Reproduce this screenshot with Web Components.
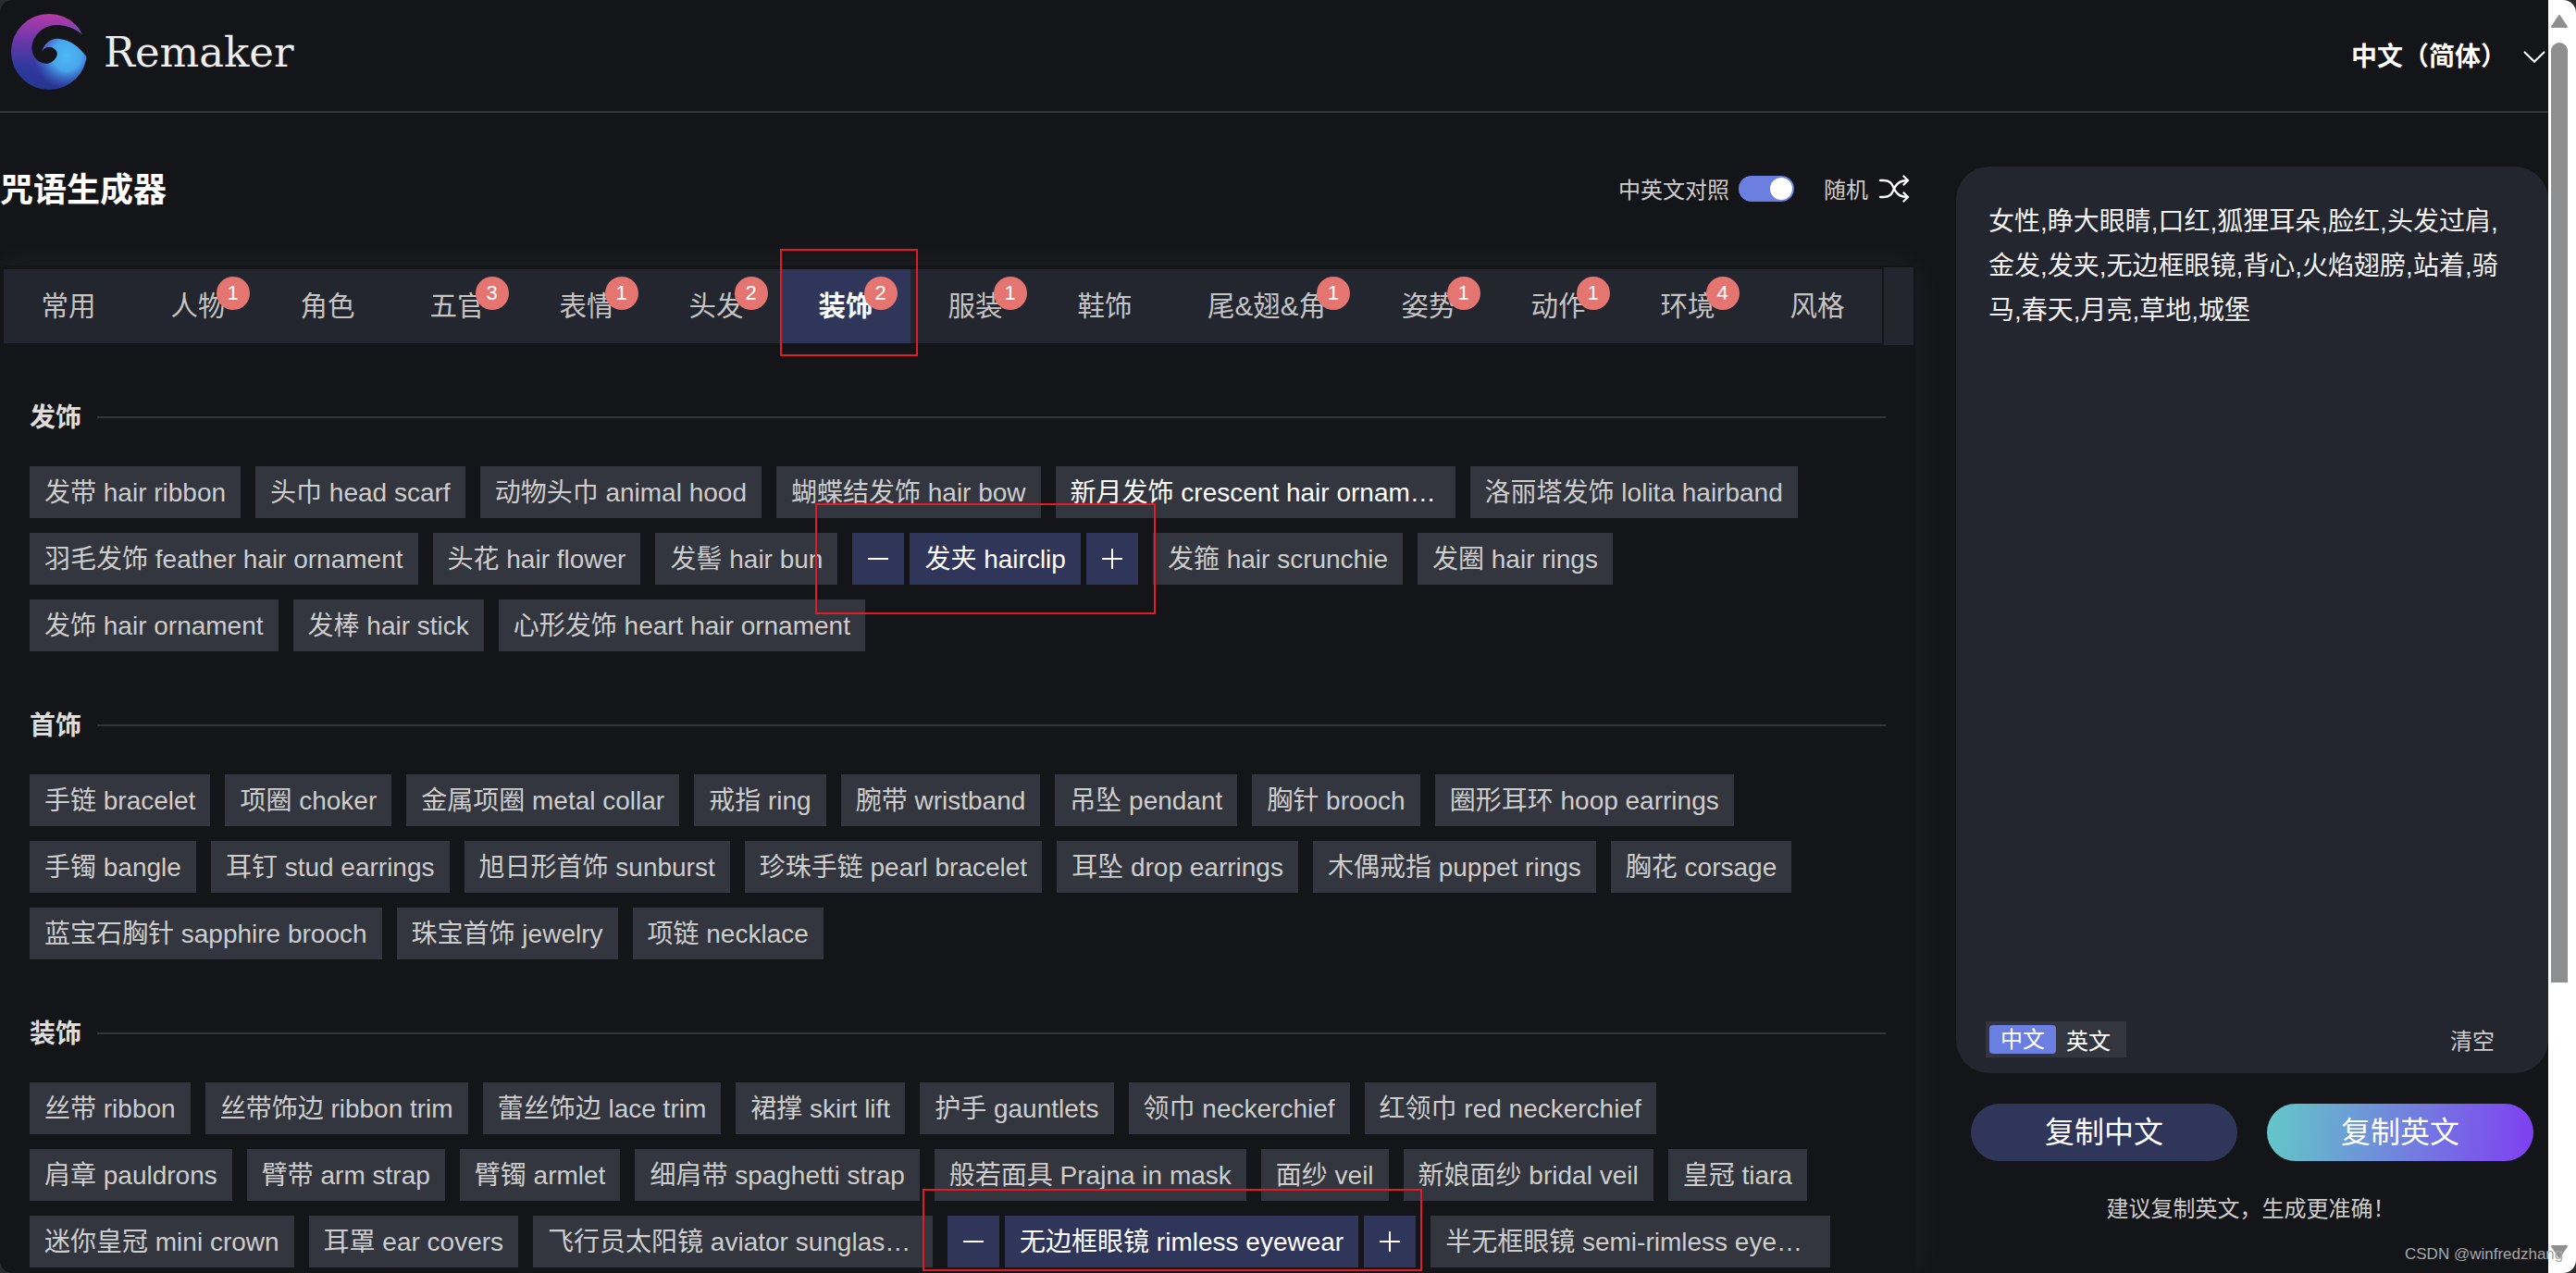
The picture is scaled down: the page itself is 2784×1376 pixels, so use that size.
<!DOCTYPE html>
<html lang="zh"><head><meta charset="utf-8"><title>Remaker</title>
<style>
html,body{margin:0;padding:0;background:#2a2a2c;overflow:hidden}
body{font-family:"Liberation Sans","Noto Sans CJK SC",sans-serif;width:2784px;height:1376px}
</style></head><body>
<x-app>
  <x-header slot="header"></x-header>
  <x-generator slot="main">
    <x-tabs>
      <x-tab>常用</x-tab><x-tab badge="1">人物</x-tab><x-tab>角色</x-tab><x-tab badge="3">五官</x-tab><x-tab badge="1">表情</x-tab><x-tab badge="2">头发</x-tab><x-tab badge="2" active>装饰</x-tab><x-tab badge="1">服装</x-tab><x-tab>鞋饰</x-tab><x-tab badge="1" wide>尾&amp;翅&amp;角</x-tab><x-tab badge="1">姿势</x-tab><x-tab badge="1">动作</x-tab><x-tab badge="4">环境</x-tab><x-tab>风格</x-tab>
    </x-tabs>
    <x-section heading="发饰">
      <x-chip>发带 hair ribbon</x-chip><x-chip>头巾 head scarf</x-chip><x-chip>动物头巾 animal hood</x-chip><x-chip>蝴蝶结发饰 hair bow</x-chip><x-chip bright>新月发饰 crescent hair ornament</x-chip><x-chip>洛丽塔发饰 lolita hairband</x-chip>
      <x-chip>羽毛发饰 feather hair ornament</x-chip><x-chip>头花 hair flower</x-chip><x-chip>发髻 hair bun</x-chip><x-chip selected>发夹 hairclip</x-chip><x-chip>发箍 hair scrunchie</x-chip><x-chip>发圈 hair rings</x-chip>
      <x-chip>发饰 hair ornament</x-chip><x-chip>发棒 hair stick</x-chip><x-chip>心形发饰 heart hair ornament</x-chip>
    </x-section>
    <x-section heading="首饰">
      <x-chip>手链 bracelet</x-chip><x-chip>项圈 choker</x-chip><x-chip>金属项圈 metal collar</x-chip><x-chip>戒指 ring</x-chip><x-chip>腕带 wristband</x-chip><x-chip>吊坠 pendant</x-chip><x-chip>胸针 brooch</x-chip><x-chip>圈形耳环 hoop earrings</x-chip>
      <x-chip>手镯 bangle</x-chip><x-chip>耳钉 stud earrings</x-chip><x-chip>旭日形首饰 sunburst</x-chip><x-chip>珍珠手链 pearl bracelet</x-chip><x-chip>耳坠 drop earrings</x-chip><x-chip>木偶戒指 puppet rings</x-chip><x-chip>胸花 corsage</x-chip>
      <x-chip>蓝宝石胸针 sapphire brooch</x-chip><x-chip>珠宝首饰 jewelry</x-chip><x-chip>项链 necklace</x-chip>
    </x-section>
    <x-section heading="装饰">
      <x-chip>丝带 ribbon</x-chip><x-chip>丝带饰边 ribbon trim</x-chip><x-chip>蕾丝饰边 lace trim</x-chip><x-chip>裙撑 skirt lift</x-chip><x-chip>护手 gauntlets</x-chip><x-chip>领巾 neckerchief</x-chip><x-chip>红领巾 red neckerchief</x-chip>
      <x-chip>肩章 pauldrons</x-chip><x-chip>臂带 arm strap</x-chip><x-chip>臂镯 armlet</x-chip><x-chip>细肩带 spaghetti strap</x-chip><x-chip>般若面具 Prajna in mask</x-chip><x-chip>面纱 veil</x-chip><x-chip>新娘面纱 bridal veil</x-chip><x-chip>皇冠 tiara</x-chip>
      <x-chip>迷你皇冠 mini crown</x-chip><x-chip>耳罩 ear covers</x-chip><x-chip>飞行员太阳镜 aviator sunglasses</x-chip><x-chip selected>无边框眼镜 rimless eyewear</x-chip><x-chip>半无框眼镜 semi-rimless eyewear</x-chip>
    </x-section>
  </x-generator>
  <x-prompt slot="side">女性,睁大眼睛,口红,狐狸耳朵,脸红,头发过肩,金发,发夹,无边框眼镜,背心,火焰翅膀,站着,骑马,春天,月亮,草地,城堡</x-prompt>
  <x-scrollbar slot="scroll"></x-scrollbar>
  <x-mark slot="over" style="left:843px;top:269px;width:149px;height:116px"></x-mark>
  <x-mark slot="over" style="left:881px;top:544px;width:368px;height:120px"></x-mark>
  <x-mark slot="over" style="left:997px;top:1285px;width:540px;height:89px"></x-mark>
  <x-watermark slot="over">CSDN @winfredzhang</x-watermark>
</x-app>
<script>
const FONT='"Liberation Sans","Noto Sans CJK SC",sans-serif';
function def(name,html,init){
  customElements.define(name,class extends HTMLElement{
    constructor(){super();this.attachShadow({mode:'open'}).innerHTML=typeof html==='function'?html(this):html;}
    connectedCallback(){if(init)init(this,this.shadowRoot);}
  });
}
def('x-app',`<style>
:host{display:block;position:relative;width:2784px;height:1376px;overflow:hidden;border-radius:14px;background:#141518;color:#ccc;font-family:${FONT}}
.wrap{display:flex;width:100%;height:100%}
.page{width:2754px;display:flex;flex-direction:column;min-width:0}
.body{display:flex;flex:1;min-height:0}
.main{width:2070px;flex:none;display:flex;flex-direction:column}
.side{margin-left:44px;width:640px;flex:none}
</style><div class="wrap"><div class="page"><slot name="header"></slot><div class="body"><div class="main"><slot name="main"></slot></div><div class="side"><slot name="side"></slot></div></div></div><slot name="scroll"></slot></div><slot name="over"></slot>`);

def('x-header',`<style>
:host{display:flex;align-items:center;height:120px;border-bottom:2px solid #33353b;padding:0 3px 0 12px;flex:none}
.logo{width:82px;height:82px;flex:none;margin-top:-8px}
.name{font-family:"DejaVu Serif",serif;font-size:45px;color:#eee;margin-left:18px;margin-top:-6px;line-height:60px}
.lang{margin-left:auto;font-size:28px;font-weight:700;color:#fff;line-height:40px;margin-top:4px}
.chev{width:24px;height:13px;margin-left:18px;margin-top:2px}
</style>
<svg class="logo" viewBox="0 0 82 82"><defs>
<linearGradient id="a" x1="0.5" y1="0" x2="0.45" y2="1"><stop offset="0" stop-color="#b63aa9"/><stop offset=".35" stop-color="#6d38aa"/><stop offset=".7" stop-color="#2f3a9f"/><stop offset="1" stop-color="#27348f"/></linearGradient>
<radialGradient id="b" cx="60" cy="45" r="36" gradientUnits="userSpaceOnUse"><stop offset="0" stop-color="#4cb9f6"/><stop offset=".45" stop-color="#48a6ec"/><stop offset="1" stop-color="#3f6fd0" stop-opacity="0"/></radialGradient></defs>
<circle cx="41" cy="41" r="41" fill="url(#a)"/><circle cx="41" cy="41" r="41" fill="url(#b)"/>
<path fill="#141518" d="M77 22C63 11 46 9 35 16C24 23 20 35 24 44C28 53 38 56 44 52C50 48 52 42 47 38C42 34 36 36 33 41C36 31 44 26 52 27C64 28 74 36 82 47L90 40V0H60C66 6 72 13 77 22Z"/></svg>
<span class="name">Remaker</span>
<span class="lang">中文（简体）</span>
<svg class="chev" viewBox="0 0 24 13" fill="none" stroke="#fff" stroke-width="2"><path d="M1 1L12 11.500L23 1"/></svg>`);

def('x-generator',`<style>
:host{display:flex;flex-direction:column;flex:1;min-height:0}
.top{height:165px;display:flex;align-items:center;flex:none;padding-right:6px}
h1{margin:2px 0 0;font-size:36px;font-weight:700;color:#fff;line-height:48px}
.tools{margin-left:auto;display:flex;align-items:center;font-size:24px;color:#ccc;margin-top:-2px}
.tools span:first-child{margin-right:-1px}
.panel{flex:1;min-height:0;background:#141518;border-radius:8px 8px 0 0;padding-top:2px;box-shadow:0 0 44px rgba(255,255,255,.055);overflow:hidden;position:relative}
.sw{width:60px;height:28px;border-radius:14px;background:#6b7fe0;margin:0 32px 0 11px;display:flex;justify-content:flex-end;align-items:center;padding:0 2px;box-sizing:border-box}
.sw i{width:24px;height:24px;border-radius:50%;background:#fff;display:block}
.ico{width:34px;height:30px;margin-left:11px}
</style>
<div class="top"><h1>咒语生成器</h1><div class="tools"><span>中英文对照</span><span class="sw"><i></i></span><span>随机</span>
<svg class="ico" viewBox="0 0 34 30" fill="none" stroke="#fff" stroke-width="2.300" stroke-linecap="round" stroke-linejoin="round"><path d="M2 6H6C14 6 15 11 17 15C19 19 22 24 32 24"/><path d="M2 24H6C14 24 15 19 17 15C19 11 22 6 32 6"/><path d="M27.500 1.500L32 6L27.500 10.500"/><path d="M27.500 19.500L32 24L27.500 28.500"/></svg></div></div>
<div class="panel"><slot></slot></div>`);

def('x-tabs',`<style>
:host{display:flex;align-items:center;height:84px;padding-left:4px;margin-bottom:58px}
.bar{display:flex;width:2030px;height:80px;background:#23262e;flex:none}
.stub{width:32px;height:84px;background:#23262e;margin-left:2px;flex:none}
</style><div class="bar"><slot></slot></div><div class="stub"></div>`);

def('x-tab',h=>`<style>
:host{display:flex;align-items:center;justify-content:center;width:140px;height:80px;flex:none;font-size:29.500px;color:#c4c4c4;line-height:80px}
:host([wide]){width:210px}
:host([active]){background:#2f365a;color:#fff;font-weight:700}
.t{position:relative;display:block;white-space:nowrap}
.b{position:absolute;left:calc(100% - 10px);top:8px;width:36px;height:36px;border-radius:50%;background:#e57571;color:#fff;font-size:22px;font-weight:400;line-height:36px;text-align:center}
</style><span class="t"><slot></slot>${h.getAttribute('badge')?`<span class="b">${h.getAttribute('badge')}</span>`:''}</span>`);

def('x-section',h=>`<style>
:host{display:block;padding:0 32px;margin-bottom:44px;width:2006px;box-sizing:content-box}
.h{display:flex;align-items:center;height:40px;margin-bottom:33px;gap:17px}
.h b{font-size:28px;font-weight:700;color:#ddd;line-height:40px;margin-top:2px}
.h i{flex:1;height:2px;background:#33353b;display:block}
.c{display:flex;flex-wrap:wrap}
</style><div class="h"><b>${h.getAttribute('heading')}</b><i></i></div><div class="c"><slot></slot></div>`);

def('x-chip',h=>{const s=h.hasAttribute('selected');return `<style>
:host{display:inline-flex;height:56px;margin:0 16px 16px 0;font-size:28px;line-height:58px;color:#cdcdcd;gap:6px}
:host([bright]){color:#fff}
.t{display:block;box-sizing:border-box;padding:0 16px;max-width:432px;background:#33363e;white-space:nowrap;overflow:hidden;text-overflow:ellipsis}
.n{width:56px;background:#2f365a;color:#fff;text-align:center;flex:none}
.n svg{display:block;margin:17px auto 0}
:host([selected]) .t{background:#2f365a;color:#fff}
</style>${s?'<span class="n"><svg width="22" height="22" viewBox="0 0 22 22" stroke="#fff" stroke-width="2"><path d="M0 11H22"/></svg></span>':''}<span class="t"><slot></slot></span>${s?'<span class="n"><svg width="22" height="22" viewBox="0 0 22 22" stroke="#fff" stroke-width="2"><path d="M0 11H22M11 0V22"/></svg></span>':''}`});

def('x-prompt',`<style>
:host{display:block}
.card{box-sizing:border-box;height:980px;margin-top:58px;background:#23262e;border-radius:36px;display:flex;flex-direction:column;padding:36px 36px 17px 35px}
.txt{flex:1;font-size:28px;line-height:48px;color:#f2f2f2;word-break:break-all}
.ctl{display:flex;align-items:center;justify-content:space-between;margin-left:-3px;padding-right:22px}
.seg{display:flex;align-items:center;background:#33363f;height:39px;width:152px;font-size:24px;box-sizing:border-box;padding-left:4px;color:#fff}
.on{width:72px;height:31px;line-height:31px;text-align:center;background:#6b7fe0;border-radius:4px;margin-right:11px}
.clr{font-size:24px;color:#ccc}
.btns{display:flex;gap:32px;padding:0 16px;margin-top:33px}
.btn{flex:1;height:62px;border-radius:31px;background:#2f365a;color:#fff;font-size:32px;line-height:62px;text-align:center}
.btn.g{background:linear-gradient(95deg,#63c9c8,#7f3ff2)}
.hint{text-align:center;font-size:24px;line-height:34px;margin-top:35px;color:#ccc;padding-right:3px}
</style>
<div class="card"><div class="txt"><slot></slot></div><div class="ctl"><div class="seg"><span class="on">中文</span><span>英文</span></div><span class="clr">清空</span></div></div>
<div class="btns"><div class="btn">复制中文</div><div class="btn g">复制英文</div></div>
<div class="hint">建议复制英文，生成更准确！</div>`);

def('x-scrollbar',`<style>
:host{display:flex;flex-direction:column;align-items:center;width:30px;height:100%;background:#fff;flex:none;box-sizing:border-box}
svg{display:block}
.th{width:18px;height:1016px;background:#8f8f8f;border-radius:9px 9px 0 0;margin-top:16px;margin-left:-6px}
.u{margin-top:16px;margin-left:-6px}.d{margin-top:284px;margin-left:-6px}
</style><svg class="u" width="18" height="14" viewBox="0 0 18 14"><path fill="#8f8f8f" stroke="#8f8f8f" stroke-width="2" stroke-linejoin="round" d="M9 1L17 13H1Z"/></svg><div class="th"></div><svg class="d" width="18" height="14" viewBox="0 0 18 14"><path fill="#8f8f8f" stroke="#8f8f8f" stroke-width="2" stroke-linejoin="round" d="M1 1H17L9 13Z"/></svg>`);

def('x-mark',`<style>:host{display:block;position:absolute;box-sizing:border-box;border:2px solid #e21c26;pointer-events:none}</style>`);
def('x-watermark',`<style>:host{position:absolute;left:2599px;top:1343px;font-size:17px;line-height:26px;color:#a8a8a8;white-space:nowrap}</style><slot></slot>`);
</script>
</body></html>
